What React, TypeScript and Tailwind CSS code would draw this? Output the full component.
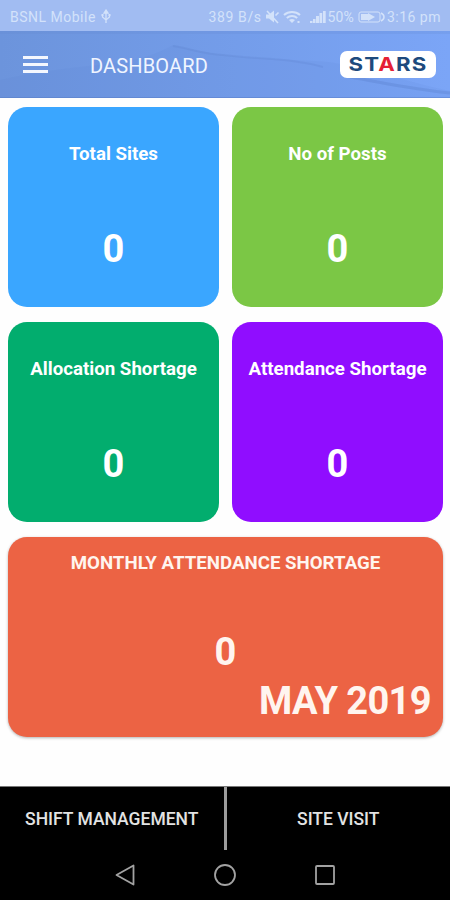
type Stat = { label: string; value: number; color: string };

const stats: Stat[] = [
  { label: "Total Sites", value: 0, color: "bg-[#3aa6ff]" },
  { label: "No of Posts", value: 0, color: "bg-[#7bc745]" },
  { label: "Allocation Shortage", value: 0, color: "bg-[#02ad6e]" },
  { label: "Attendance Shortage", value: 0, color: "bg-[#900dff]" },
];

const StatusBar = () => (
  <div className="relative flex h-[31px] items-center bg-[#a1bcf2] pt-[2px] pr-[9px] pl-[10px] text-[14px] leading-none text-[#d3e2fa]">
    <span className="tracking-[0.5px]">BSNL Mobile</span>
    <svg className="ml-[4px] h-4 w-3" viewBox="0 0 12 16" fill="none" stroke="currentColor" strokeWidth="1.3">
      <path d="M6 14V3M2.500 6v2L6 11l3.500-3V6" />
      <path d="M6 1 4 4h4z" fill="currentColor" />
      <path d="M1.500 6h2M8.500 6h2" strokeWidth="2" />
    </svg>
    <span className="ml-auto tracking-[0.6px]">389 B/s</span>
    <svg className="ml-[3px] h-4 w-[15px]" viewBox="0 0 15 16" fill="currentColor">
      <path d="M1 5.500h3l5-4v12l-5-4H1z" />
      <path d="m2 2 11 12M10.500 6.500l3-3" stroke="currentColor" strokeWidth="1.600" />
    </svg>
    <svg className="ml-[3px] h-4 w-[18px]" viewBox="0 0 18 16" fill="none" stroke="currentColor" strokeWidth="2">
      <path d="M1 6c4.500-4 11.500-4 16 0M3.800 9c3-2.600 7.400-2.600 10.400 0" />
      <path d="M6 11c2-1.500 4-1.500 6 0l-3 3z" fill="currentColor" stroke="none" />
      <path d="M15.500 12v2" />
    </svg>
    <svg className="ml-[9px] h-4 w-4" viewBox="0 0 16 16" fill="currentColor">
      <path d="M0 14v-2h2.500v2zM3 14v-4h2.500v4zM6 14V7h3v7zM9.500 14V4h2.700v10zM13 14V2h2.700v12z" />
    </svg>
    <span className="ml-[2px] tracking-[0.100px]">50%</span>
    <svg className="ml-[4px] h-4 w-[27px]" viewBox="0 0 27 16" fill="none" stroke="currentColor">
      <rect x="1" y="3" width="21" height="10" rx="2" />
      <path d="M3 5h8v6H3z" fill="currentColor" stroke="none" />
      <path d="m10 4 7 4-7 4z" fill="currentColor" stroke="none" />
      <path d="M23 4c2 1 3 2 3 4s-1 3-3 4" strokeWidth="1.500" />
    </svg>
    <span className="ml-[2px] tracking-[0.500px]">3:16 pm</span>
  </div>
);

const Logo = () => (
  <svg className="h-[27px] w-24" viewBox="0 0 96 27">
    <rect width="96" height="27" rx="7" fill="#fff" />
    <text
      x="8.500"
      y="20"
      textLength="79"
      lengthAdjust="spacingAndGlyphs"
      fill="#1d4a7d"
      fontFamily="Inter, sans-serif"
      fontSize="19"
      fontWeight="700"
      letterSpacing="1"
    >
      ST<tspan fill="#e51f35">A</tspan>RS
    </text>
  </svg>
);

const Toolbar = () => (
  <div className="relative flex h-[67px] items-center pr-[14px] pl-[23px]">
    <button aria-label="Open menu" className="flex w-[25px] flex-col gap-[4px] pb-[1px]">
      <span className="h-[3px] bg-[#f4f7fe]" />
      <span className="h-[3px] bg-[#f4f7fe]" />
      <span className="h-[3px] bg-[#f4f7fe]" />
    </button>
    <h1 className="ml-[42px] pt-[2px] text-[20px] leading-none tracking-[0.15px] text-[#f0f5ff]">DASHBOARD</h1>
    <div className="ml-auto">
      <Logo />
    </div>
  </div>
);

const StatCard = ({ label, value, color }: Stat) => (
  <section className={`flex h-[200px] flex-col items-center rounded-[19px] text-white ${color}`}>
    <h2 className="mt-[37px] text-[18.7px] leading-[21px] font-bold whitespace-nowrap">{label}</h2>
    <p className="mt-[62px] text-[38px] leading-[44px] font-bold">{value}</p>
  </section>
);

export default function App() {
  return (
    <main className="flex h-[900px] w-[450px] flex-col overflow-hidden bg-[#fefefe] font-['Roboto',sans-serif]">
      <header className="relative h-[98px] shrink-0 bg-linear-to-r from-[#6c94dc] to-[#7ba5f7]">
        {/* faint brushed streaks behind the toolbar */}
        <svg className="absolute inset-0 h-full w-full" viewBox="0 0 450 98" fill="none">
          <path d="M0 31h450v3H0z" fill="#6286cc" opacity=".2" />
          <path d="M0 97h450v1H0z" fill="#5276bd" opacity=".4" />
          <path d="M173 45c52 14 93 13 156 17 48 8 78 20 121 29v7H0V80c90-20 130-10 173-35" fill="#587dcc" opacity=".1" />
          <path d="M173 46c15 2 30 8 50 9 50 5 70 4 100 12" stroke="#4f75bf" strokeWidth="2" opacity=".15" />
          <path d="M350 77c35 6 60 12 100 16" stroke="#4f75bf" strokeWidth="3" opacity=".25" />
        </svg>
        <StatusBar />
        <Toolbar />
      </header>

      <div className="flex flex-col gap-[15px] pt-[9px] pr-[7px] pl-2">
        <div className="grid grid-cols-2 gap-x-[13px] gap-y-[15px]">
          {stats.map((stat) => (
            <StatCard key={stat.label} {...stat} />
          ))}
        </div>
        <section className="flex h-[200px] flex-col items-center rounded-[19px] bg-[#ec6344] text-[#fff5ef] shadow-[0_1px_3px_rgba(0,0,0,0.3)]">
          <h2 className="mt-[16px] text-[18.7px] leading-[21px] font-bold">MONTHLY ATTENDANCE SHORTAGE</h2>
          <p className="mt-[56px] text-[38px] leading-[44px] font-bold">0</p>
          <p className="mt-[5px] mr-[12px] self-end text-[38px] leading-[44px] font-bold tracking-[-0.6px]">MAY 2019</p>
        </section>
      </div>

      <footer className="mt-auto h-[114px] shrink-0 border-t border-[#777] bg-black">
        <nav className="flex h-[63px] text-[17.5px] font-medium text-[#e3e3e3]">
          <button className="flex-1 border-r-[3px] border-[#9c9c9c] pt-[2px]">SHIFT MANAGEMENT</button>
          <button className="flex-1 pt-[2px]">SITE VISIT</button>
        </nav>
        <div className="flex h-[50px] items-center justify-center gap-[76px] text-[#a2a2a2]">
          <svg className="h-6 w-6" viewBox="0 0 24 24" fill="none" stroke="currentColor" strokeWidth="1.800">
            <path d="M20.500 2.500v19L3.500 12z" strokeLinejoin="round" />
          </svg>
          <svg className="h-6 w-6" viewBox="0 0 24 24" fill="none" stroke="currentColor" strokeWidth="1.800">
            <circle cx="12" cy="12" r="10" />
          </svg>
          <svg className="h-6 w-6" viewBox="0 0 24 24" fill="none" stroke="currentColor" strokeWidth="1.800">
            <rect x="3" y="3" width="18" height="18" rx="1" />
          </svg>
        </div>
      </footer>
    </main>
  );
}
